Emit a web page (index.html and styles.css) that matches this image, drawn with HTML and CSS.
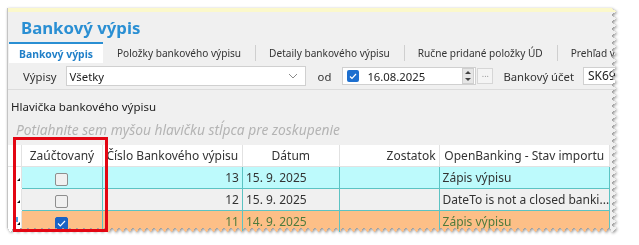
FILE: index.html
```html
<!DOCTYPE html>
<html>
<head>
    <title>Bankový výpis</title>
    <meta charset='UTF-8'>
    <link rel="stylesheet" href="styles.css">
</head>
<body>
    <div class='page'>
        <div class='shot'>
            <div class='panel'>
                <div class='strip'></div>
                <h1 class='title'>Bankový výpis</h1>
                <div class='tabs'>
                    <span class='tab active'>Bankový výpis</span>
                    <span class='tab'>Položky bankového výpisu</span>
                    <span class='tab'>Detaily bankového výpisu</span>
                    <span class='tab'>Ručne pridané položky ÚD</span>
                    <span class='tab last'>Prehľad všetkých</span>
                </div>
                <div class='filters'>
                    <span class='lbl lbl-vypisy'>Výpisy</span>
                    <div class='combo'>
                        <span>Všetky</span>
                        <svg class='chevron' width='10' height='6' viewBox='0 0 10 6'><path d='M1 1l4 4 4-4' fill='none' stroke='#8a8a8a' stroke-width='1'/></svg>
                    </div>
                    <span class='lbl lbl-od'>od</span>
                    <div class='datebox'>
                        <span class='dchk'><svg width='8' height='7' viewBox='0 0 8 7'><path d='M1 3.5l2 2 4-4.5' fill='none' stroke='#fff' stroke-width='1.2'/></svg></span>
                        <span class='dtext'>16.08.2025</span>
                        <span class='spin'><i class='up'></i><i class='down'></i></span>
                    </div>
                    <span class='dots'>...</span>
                    <span class='lbl lbl-ucet'>Bankový účet</span>
                    <div class='account'>SK6913</div>
                </div>
                <div class='section'>Hlavička bankového výpisu</div>
                <div class='groupby'>Potiahnite sem myšou hlavičku stĺpca pre zoskupenie</div>
                <table class='grid'>
                    <tr class='head'>
                        <th class='ind'></th>
                        <th class='c-zauct'>Zaúčtovaný</th>
                        <th class='c-cislo'>Číslo Bankového výpisu</th>
                        <th class='c-datum'>Dátum</th>
                        <th class='c-zost right'>Zostatok</th>
                        <th class='c-ob'>OpenBanking - Stav importu</th>
                    </tr>
                    <tr class='row cyan'>
                        <td class='ind'><i class='tri'></i></td>
                        <td class='center'><span class='cb'></span></td>
                        <td class='right'>13</td>
                        <td>15. 9. 2025</td>
                        <td></td>
                        <td>Zápis výpisu</td>
                    </tr>
                    <tr class='row'>
                        <td class='ind'><i class='tri'></i></td>
                        <td class='center'><span class='cb'></span></td>
                        <td class='right'>12</td>
                        <td>15. 9. 2025</td>
                        <td></td>
                        <td>DateTo is not a closed banki...</td>
                    </tr>
                    <tr class='row sel'>
                        <td class='ind'><i class='star'></i><i class='tri'></i></td>
                        <td class='center'><span class='cb on'><svg width='9' height='7' viewBox='0 0 9 7'><path d='M1 3.5l2.3 2.3L8 1' fill='none' stroke='#fff' stroke-width='1.2'/></svg></span></td>
                        <td class='right'>11</td>
                        <td>14. 9. 2025</td>
                        <td></td>
                        <td>Zápis výpisu</td>
                    </tr>
                </table>
            </div>
        </div>
        <div class='mark'></div>
    </div>
</body>
</html>
```

FILE: styles.css
```css
body { margin: 0; background: #fff; font-family: "Noto Sans", "Open Sans", sans-serif; color: #222; }
.page { position: relative; width: 639px; height: 245px; overflow: hidden; }
.shot { padding: 8px 0 0 7px; filter: drop-shadow(1px 1px 1.5px rgba(0,0,0,0.45)); }
.panel {
    width: 609px;
    height: 224px;
    background: #f0f0f0;
    border-left: 1px solid #c4c4c4;
    box-sizing: border-box;
    overflow: hidden;
    -webkit-mask:
        linear-gradient(#000 0 0) 0 0 / calc(100% - 5px) calc(100% - 5px) no-repeat,
        conic-gradient(from 235deg at 100% 50%, #000 70deg, #0000 0) 100% 0 / 5px 7px repeat-y,
        conic-gradient(from 325deg at 50% 100%, #000 70deg, #0000 0) 0 100% / 7px 5px repeat-x;
}
.strip { height: 4px; background: #fbf8cb; }
.title {
    margin: 0;
    height: 30px;
    padding-left: 13px;
    font-size: 16.8px;
    line-height: 32px;
    font-weight: 700;
    color: #2a8fd3;
}
.tabs { display: flex; height: 21px; align-items: stretch; font-size: 10.1px; color: #333; white-space: nowrap; overflow: hidden; }
.tab { flex: none; display: flex; align-items: center; padding: 0 14px; position: relative; }
.tab + .tab::before { content: ''; position: absolute; left: 0; top: 3px; bottom: 2px; border-left: 1px solid #cfcfcf; }
.tab.active + .tab::before { display: none; }
.tab.active {
    margin-left: 1px;
    width: 94px;
    padding: 0;
    justify-content: center;
    background: #fff;
    border-top: 2px solid #2a8fd3;
    color: #1f7fc8;
    font-size: 10.4px;
    font-weight: 700;
    box-sizing: border-box;
}

.filters {
    display: flex;
    align-items: center;
    height: 26px;
    border-bottom: 1px solid #dcdcdc;
    font-size: 11.3px;
    white-space: nowrap;
    overflow: hidden;
}
.lbl { color: #333; }
.lbl-vypisy { margin-left: 15px; }
.combo {
    margin-left: 9px;
    width: 240px;
    height: 20px;
    flex: none;
    box-sizing: border-box;
    background: #fff;
    border: 1px solid #d0d0d0;
    display: flex;
    align-items: center;
    justify-content: space-between;
    padding: 0 7px 0 3px;
}
.lbl-od { margin-left: 12px; }
.datebox {
    margin-left: 11px;
    width: 134px;
    height: 18px;
    flex: none;
    box-sizing: border-box;
    background: #fff;
    border: 1px solid #d0d0d0;
    display: flex;
    align-items: center;
}
.dchk {
    width: 12px;
    height: 12px;
    margin-left: 4px;
    border-radius: 2px;
    background: #1d6fcf;
    display: flex;
    align-items: center;
    justify-content: center;
}
.dtext { margin-left: 8px; flex: 1; }
.spin {
    width: 10px;
    height: 14px;
    margin-right: 1px;
    background: #e6e6e6;
    border: 1px solid #cfcfcf;
    display: flex;
    flex-direction: column;
    align-items: center;
    justify-content: space-around;
}
.spin i { width: 0; height: 0; border-left: 3px solid transparent; border-right: 3px solid transparent; }
.spin .up { border-bottom: 3px solid #444; }
.spin .down { border-top: 3px solid #444; }
.dots {
    margin-left: 1px;
    width: 14px;
    height: 14px;
    flex: none;
    background: #f4f4f4;
    border: 1px solid #d6d6d6;
    font-size: 9px;
    line-height: 10px;
    text-align: center;
    color: #999;
}
.lbl-ucet { margin-left: 10px; }
.account {
    margin-left: 9px;
    height: 18px;
    flex: 1;
    min-width: 0;
    box-sizing: border-box;
    background: #fff;
    border: 1px solid #d0d0d0;
    padding-left: 4px;
    font-size: 12px;
    line-height: 16px;
    overflow: hidden;
}

.section { height: 26px; padding: 9px 0 0 3px; box-sizing: border-box; font-size: 11.5px; line-height: 16px; color: #222; }
.groupby {
    height: 26px;
    padding-left: 8px;
    box-sizing: border-box;
    font-size: 13.8px;
    line-height: 27px;
    font-style: italic;
    color: #b4b4b4;
    white-space: nowrap;
    overflow: hidden;
}
.grid {
    margin-top: 3px;
    border-collapse: collapse;
    table-layout: fixed;
    width: 602px;
    font-size: 12px;
    color: #333;
}
.grid th, .grid td { height: 21px; padding: 0 3px; white-space: nowrap; overflow: hidden; }
.grid th { background: #fff; font-weight: 400; text-align: center; border-right: 1px solid #e2e2e2; border-bottom: 1px solid #e2e2e2; }
.grid th.right { text-align: right; }
.grid .ind { width: 13px; background: #fff; border-right: 1px solid #e2e2e2; position: relative; padding: 0; }
.c-zauct { width: 73px; }
.c-cislo { width: 132px; }
.c-datum { width: 89px; }
.c-zost { width: 92px; }
.c-ob { width: 162px; }
.row td { border-right: 1px solid #5cc3c3; border-bottom: 1px solid #5cc3c3; }
.row td.ind { border-right: 1px solid #e2e2e2; border-bottom: 1px solid #fff; }
.row td.right { text-align: right; }
.row td.center { text-align: center; }
.cyan td { background: #bdfafc; }
.sel td { background: #fdbf87; color: #4d7a3c; border-top: 1px dotted #555; }
.sel td.ind { background: #fff; border-top: 1px solid #fff; }
.tri {
    position: absolute;
    left: 9px;
    top: 11px;
    width: 0;
    height: 0;
    border-left: 3px solid transparent;
    border-bottom: 3px solid #111;
}
.star { position: absolute; left: 8px; top: 6px; width: 2px; height: 5px; background: #4aa0e0; }
.cb {
    display: inline-block;
    width: 13px;
    height: 13px;
    margin-top: 2px;
    vertical-align: middle;
    box-sizing: border-box;
    border: 1px solid #8e8e8e;
    border-radius: 2px;
    background: #f0f0f0;
}
.cb.on { background: #1b63c5; border-color: #1b63c5; display: inline-flex; align-items: center; justify-content: center; }

.mark {
    position: absolute;
    left: 13px;
    top: 137px;
    width: 95px;
    height: 95px;
    box-sizing: border-box;
    border: 3px solid #e30613;
}
```
